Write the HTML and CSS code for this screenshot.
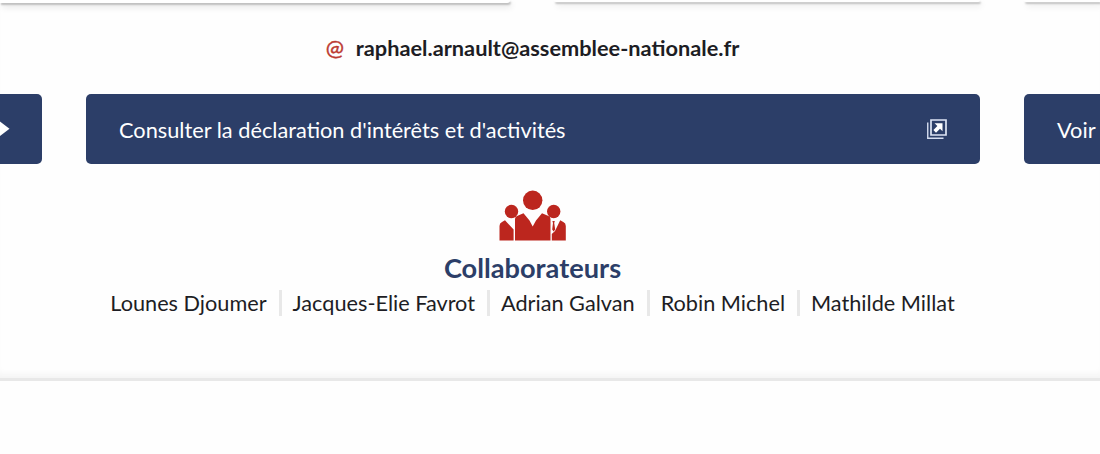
FILE: index.html
```html
<!DOCTYPE html>
<html lang="fr">
<head>
    <meta charset="utf-8">
    <title>Raphaël Arnault - Collaborateurs</title>
    <link rel="stylesheet" href="styles.css">
</head>
<body>
    <div class="page">
        <div class="cards">
            <div class="card card-first"></div>
            <div class="card"></div>
            <div class="card card-last"></div>
        </div>
        <div class="contact">
            <span class="contact-icon">@</span>
            <a class="contact-mail" href="#">raphael.arnault@assemblee-nationale.fr</a>
        </div>
        <div class="buttons">
            <a class="button button-prev" href="#">
                <svg width="10" height="16" viewBox="0 0 10 16"><path d="M0 0.5L9.5 7.7L0 15z" fill="#fff"/></svg>
            </a>
            <a class="button" href="#">
                <span class="button-label">Consulter la déclaration d'intérêts et d'activités</span>
                <svg class="button-icon" width="20" height="20" viewBox="0 0 20 20">
                    <path d="M.75 3.5v15.75h15.75" fill="none" stroke="#d5ddf0" stroke-width="1.4"/>
                    <path d="M4 1h15v15H4z" fill="none" stroke="#dde4f4" stroke-width="1.7"/>
                    <path d="M7.5 4.2h8v8l-2.5-2.5-4 4-2.6-2.6 4-4z" fill="#fff"/>
                </svg>
            </a>
            <a class="button button-next" href="#">
                <span class="button-label">Voir</span>
            </a>
        </div>
        <div class="team">
            <svg class="team-icon" width="68" height="51" viewBox="0 0 68 51" fill="#bc261e">
                <circle cx="33.7" cy="10.3" r="9.7"/>
                <circle cx="12.5" cy="21.5" r="6.7"/>
                <circle cx="54.7" cy="21.5" r="6.7"/>
                <path d="M16 50.5V29Q16 27 18 26L24.5 23.2L30.5 30.5L33.7 36.5L37 30.5L43 23.2L49.5 26Q51.5 27 51.5 29V50.5z"/>
                <path d="M.5 50.5V36Q.5 33 3 32L6 30.3L14.6 39.5V50.5z"/>
                <path d="M52.8 50.5V44L56 41L61.2 30.3L64.3 32Q66.8 33 66.8 36V50.5z"/>
                <path d="M53.4 31h2.4l-.6 2 1 6.5-1.6 2-1.4-2 .8-6.5z"/>
            </svg>
            <h2 class="team-title">Collaborateurs</h2>
            <ul class="team-list">
                <li>Lounes Djoumer</li>
                <li>Jacques-Elie Favrot</li>
                <li>Adrian Galvan</li>
                <li>Robin Michel</li>
                <li>Mathilde Millat</li>
            </ul>
        </div>
    </div>
</body>
</html>
```
FILE: styles.css
```css
body {
    margin: 0;
    font-family: Lato, sans-serif;
    font-size: 21.75px;
    color: #1d1d24;
    background-color: #fefefe;
    overflow: hidden;
}

a {
    color: inherit;
    text-decoration: none;
}

.page {
    height: 381px;
    display: flex;
    flex-direction: column;
    box-sizing: border-box;
    box-shadow: inset 0 -3px 0 #e8e8e8, inset 0 -10px 7px -4px #f2f2f2;
}

.cards {
    display: grid;
    grid-template-columns: 510px 426px 76px;
    gap: 44px;
    height: 35px;
}

.card {
    height: 2px;
    background-color: #fff;
    border-radius: 0 0 4px 4px;
    box-shadow: 1px 2px 2px 0 #bdbdbd, 2px 4px 6px 0 #dedede;
}

.card-first {
    height: 3px;
    border-bottom-left-radius: 0;
}

.card-last {
    border-bottom-right-radius: 0;
}

.contact {
    display: flex;
    justify-content: center;
    gap: 12px;
    width: 1065px;
    height: 59px;
    line-height: 27px;
}

.contact-icon {
    color: #bc3a32;
    -webkit-text-stroke: 0.4px #bc3a32;
}

.contact-mail {
    font-weight: bold;
}

.buttons {
    display: grid;
    grid-template-columns: 42px 894px 76px;
    gap: 44px;
}

.button {
    display: flex;
    align-items: center;
    justify-content: space-between;
    height: 70px;
    box-sizing: border-box;
    padding: 0 33px;
    border-radius: 5px;
    background-color: #2c3e68;
    color: #fff;
}

.button-label {
    padding-top: 2px;
}

.button-prev {
    padding: 0;
    border-radius: 0 5px 5px 0;
}

.button-next {
    padding-right: 0;
    border-radius: 5px 0 0 5px;
}

.team {
    width: 1065px;
    display: flex;
    flex-direction: column;
    align-items: center;
    padding-top: 26px;
}

.team-title {
    margin: 11px 0 6px;
    font-size: 27.2px;
    line-height: 32px;
    color: #2c3e68;
}

.team-list {
    display: flex;
    margin: 0;
    padding: 0;
    list-style: none;
    font-size: 21.7px;
    line-height: 26px;
}

.team-list li + li {
    margin-left: 12px;
    padding-left: 11px;
    border-left: 3px solid #e8e8e8;
}
```
